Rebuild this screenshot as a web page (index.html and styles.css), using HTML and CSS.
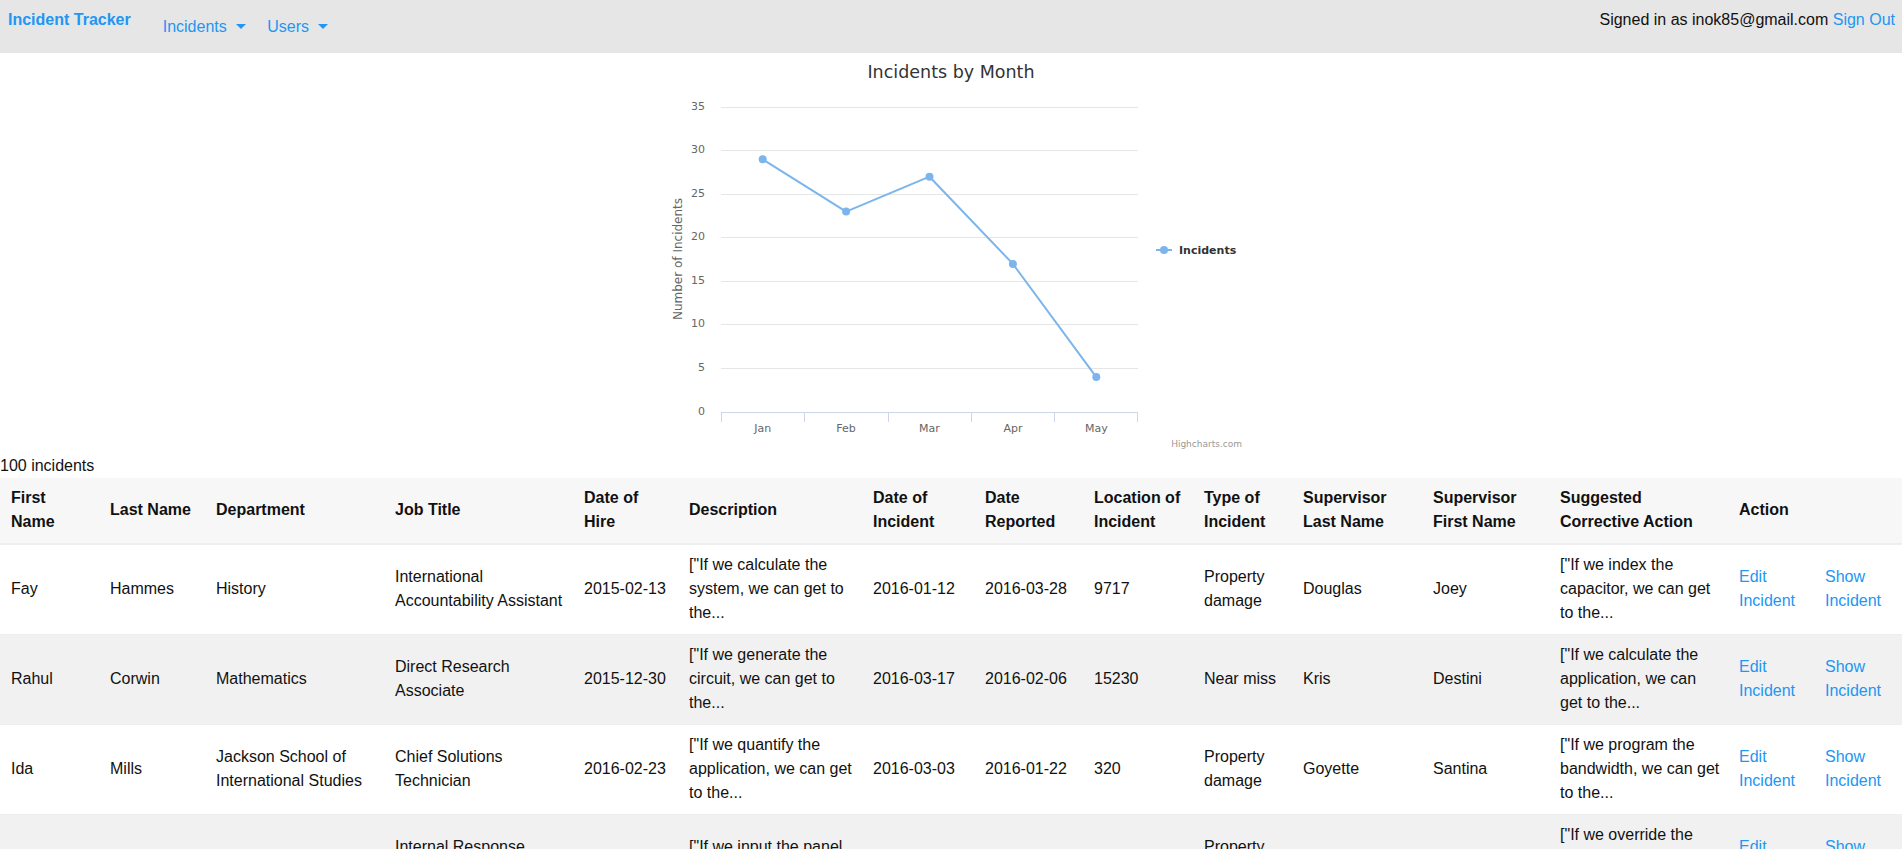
FILE: index.html
```html
<!DOCTYPE html>
<html lang="en">
<head>
<meta charset="utf-8">
<title>Incident Tracker</title>
<link rel="stylesheet" href="styles.css">
</head>
<body>
<nav class="navbar">
  <a class="brand" href="#">Incident Tracker</a>
  <ul class="menu">
    <li><a href="#">Incidents <span class="caret"></span></a></li>
    <li><a href="#">Users <span class="caret"></span></a></li>
  </ul>
  <div class="account">Signed in as inok85@gmail.com <a href="#">Sign Out</a></div>
</nav>

<main>
  <div class="chart">
    <svg class="chart-svg" width="600" height="400" viewBox="0 1 600 400">
      <rect x="0" y="0" width="600" height="402" fill="#ffffff"/>
      <text class="ch-title" x="300" y="26" text-anchor="middle">Incidents by Month</text>
      <g class="grid">
        <line x1="70" x2="487" y1="55.5" y2="55.5"/>
        <line x1="70" x2="487" y1="98.5" y2="98.5"/>
        <line x1="70" x2="487" y1="142.5" y2="142.5"/>
        <line x1="70" x2="487" y1="185.5" y2="185.5"/>
        <line x1="70" x2="487" y1="229.5" y2="229.5"/>
        <line x1="70" x2="487" y1="272.5" y2="272.5"/>
        <line x1="70" x2="487" y1="316.5" y2="316.5"/>
      </g>
      <g class="axis">
        <line x1="70" x2="487" y1="360.5" y2="360.5"/>
        <line x1="70.5" x2="70.5" y1="360" y2="370"/>
        <line x1="153.5" x2="153.5" y1="360" y2="370"/>
        <line x1="237.5" x2="237.5" y1="360" y2="370"/>
        <line x1="320.5" x2="320.5" y1="360" y2="370"/>
        <line x1="403.5" x2="403.5" y1="360" y2="370"/>
        <line x1="486.5" x2="486.5" y1="360" y2="370"/>
      </g>
      <g class="ylabels" text-anchor="end">
        <text x="54" y="58">35</text>
        <text x="54" y="101">30</text>
        <text x="54" y="145">25</text>
        <text x="54" y="188">20</text>
        <text x="54" y="232">15</text>
        <text x="54" y="275">10</text>
        <text x="54" y="319">5</text>
        <text x="54" y="363">0</text>
      </g>
      <text class="ytitle" x="0" y="0" text-anchor="middle" transform="translate(31 207) rotate(-90)">Number of Incidents</text>
      <g class="xlabels" text-anchor="middle">
        <text x="111.7" y="380">Jan</text>
        <text x="195.1" y="380">Feb</text>
        <text x="278.5" y="380">Mar</text>
        <text x="361.9" y="380">Apr</text>
        <text x="445.3" y="380">May</text>
      </g>
      <polyline class="series" points="111.7,107.3 195.1,159.6 278.5,124.7 361.9,211.9 445.3,325.1"/>
      <g class="markers">
        <circle cx="111.7" cy="107.3" r="4"/>
        <circle cx="195.1" cy="159.6" r="4"/>
        <circle cx="278.5" cy="124.7" r="4"/>
        <circle cx="361.9" cy="211.9" r="4"/>
        <circle cx="445.3" cy="325.1" r="4"/>
      </g>
      <g class="legend">
        <line x1="505" x2="521" y1="198" y2="198"/>
        <circle cx="513" cy="198" r="4"/>
        <text x="528" y="202">Incidents</text>
      </g>
      <text class="credits" x="591" y="395" text-anchor="end">Highcharts.com</text>
    </svg>
  </div>

  <p class="count">100 incidents</p>

  <table class="incidents">
    <colgroup>
      <col class="w-first">
      <col class="w-last">
      <col class="w-dept">
      <col class="w-job">
      <col class="w-hire">
      <col class="w-desc">
      <col class="w-date">
      <col class="w-reported">
      <col class="w-location">
      <col class="w-type">
      <col class="w-suplast">
      <col class="w-supfirst">
      <col class="w-action-text">
      <col class="w-edit">
      <col class="w-show">
    </colgroup>
    <thead>
      <tr>
        <th>First Name</th>
        <th>Last Name</th>
        <th>Department</th>
        <th>Job Title</th>
        <th>Date of Hire</th>
        <th>Description</th>
        <th>Date of Incident</th>
        <th>Date Reported</th>
        <th>Location of Incident</th>
        <th>Type of Incident</th>
        <th>Supervisor Last Name</th>
        <th>Supervisor First Name</th>
        <th>Suggested Corrective Action</th>
        <th colspan="2">Action</th>
      </tr>
    </thead>
    <tbody>
      <tr>
        <td>Fay</td>
        <td>Hammes</td>
        <td>History</td>
        <td>International Accountability Assistant</td>
        <td>2015-02-13</td>
        <td>["If we calculate the system, we can get to the...</td>
        <td>2016-01-12</td>
        <td>2016-03-28</td>
        <td>9717</td>
        <td>Property damage</td>
        <td>Douglas</td>
        <td>Joey</td>
        <td class="corrective">["If we index the capacitor, we can get to the...</td>
        <td><a href="#">Edit Incident</a></td>
        <td><a href="#">Show Incident</a></td>
      </tr>
      <tr>
        <td>Rahul</td>
        <td>Corwin</td>
        <td>Mathematics</td>
        <td>Direct Research Associate</td>
        <td>2015-12-30</td>
        <td>["If we generate the circuit, we can get to the...</td>
        <td>2016-03-17</td>
        <td>2016-02-06</td>
        <td>15230</td>
        <td>Near miss</td>
        <td>Kris</td>
        <td>Destini</td>
        <td class="corrective">["If we calculate the application, we can get to the...</td>
        <td><a href="#">Edit Incident</a></td>
        <td><a href="#">Show Incident</a></td>
      </tr>
      <tr>
        <td>Ida</td>
        <td>Mills</td>
        <td>Jackson School of International Studies</td>
        <td>Chief Solutions Technician</td>
        <td>2016-02-23</td>
        <td>["If we quantify the application, we can get to the...</td>
        <td>2016-03-03</td>
        <td>2016-01-22</td>
        <td>320</td>
        <td>Property damage</td>
        <td>Goyette</td>
        <td>Santina</td>
        <td class="corrective">["If we program the bandwidth, we can get to the...</td>
        <td><a href="#">Edit Incident</a></td>
        <td><a href="#">Show Incident</a></td>
      </tr>
      <tr>
        <td>Jaylen</td>
        <td>Kuhn</td>
        <td>Physics</td>
        <td>Internal Response Planner</td>
        <td>2015-07-08</td>
        <td>["If we input the panel, we can get to the...</td>
        <td>2016-04-19</td>
        <td>2016-02-14</td>
        <td>4411</td>
        <td>Property damage</td>
        <td>Gleichner</td>
        <td>Ottilie</td>
        <td class="corrective">["If we override the driver, we can get to the...</td>
        <td><a href="#">Edit Incident</a></td>
        <td><a href="#">Show Incident</a></td>
      </tr>
      <tr>
        <td>Marco</td>
        <td>Hilpert</td>
        <td>Chemistry</td>
        <td>Senior Data Officer</td>
        <td>2015-04-21</td>
        <td>["If we back up the port, we can get to the...</td>
        <td>2016-02-02</td>
        <td>2016-05-09</td>
        <td>1288</td>
        <td>Near miss</td>
        <td>Bauch</td>
        <td>Elva</td>
        <td class="corrective">["If we copy the matrix, we can get to the...</td>
        <td><a href="#">Edit Incident</a></td>
        <td><a href="#">Show Incident</a></td>
      </tr>
    </tbody>
  </table>
</main>
</body>
</html>
```

FILE: styles.css
```css
html, body {
  margin: 0;
  padding: 0;
}

body {
  font-family: "Liberation Sans", Arial, Helvetica, sans-serif;
  font-size: 16px;
  line-height: 24px;
  color: #222222;
  background: #ffffff;
}

a {
  color: #2196f3;
  text-decoration: none;
}

/* ---------- Navbar ---------- */
.navbar {
  display: flex;
  align-items: flex-start;
  height: 53px;
  background: #e6e6e6;
  line-height: 20px;
}

.brand {
  padding: 10px 0 0 8px;
  font-weight: bold;
  color: #2196f3;
}

.menu {
  display: flex;
  gap: 21px;
  list-style: none;
  margin: 0 0 0 32px;
  padding: 17px 0 0 0;
}

.caret {
  display: inline-block;
  width: 0;
  height: 0;
  margin-left: 5px;
  vertical-align: 3px;
  border-top: 5px solid #2196f3;
  border-left: 5px solid transparent;
  border-right: 5px solid transparent;
}

.account {
  margin-left: auto;
  padding: 10px 7px 0 0;
  color: #111111;
}

/* ---------- Chart ---------- */
.chart {
  width: 600px;
  height: 400px;
  margin: 0 auto;
}

.chart-svg {
  display: block;
  font-family: "DejaVu Sans", "Lucida Grande", sans-serif;
}

.ch-title {
  font-size: 17.5px;
  fill: #333333;
}

.grid line {
  stroke: #e6e6e6;
  stroke-width: 1;
}

.axis line {
  stroke: #ccd6eb;
  stroke-width: 1;
}

.ylabels text,
.xlabels text {
  font-size: 11px;
  fill: #666666;
}

.ytitle {
  font-size: 12px;
  fill: #666666;
}

.series {
  fill: none;
  stroke: #7cb5ec;
  stroke-width: 2;
  stroke-linejoin: round;
}

.markers circle {
  fill: #7cb5ec;
}

.legend line {
  stroke: #7cb5ec;
  stroke-width: 2;
}

.legend circle {
  fill: #7cb5ec;
}

.legend text {
  font-size: 11px;
  font-weight: bold;
  fill: #333333;
}

.credits {
  font-size: 9px;
  fill: #999999;
}

/* ---------- Count ---------- */
.count {
  margin: 0;
  padding-top: 1px;
  color: #111111;
}

/* ---------- Table ---------- */
.incidents {
  width: 100%;
  border-collapse: collapse;
  table-layout: fixed;
  color: #111111;
}

.w-first { width: 102px; }
.w-last { width: 106px; }
.w-dept { width: 179px; }
.w-job { width: 189px; }
.w-hire { width: 105px; }
.w-desc { width: 184px; }
.w-date { width: 112px; }
.w-reported { width: 109px; }
.w-location { width: 110px; }
.w-type { width: 99px; }
.w-suplast { width: 130px; }
.w-supfirst { width: 127px; }
.w-action-text { width: 179px; }
.w-edit { width: 86px; }
.w-show { width: 85px; }

.incidents th,
.incidents td {
  padding: 8px 8px 9px 8px;
  text-align: left;
  vertical-align: middle;
  line-height: 24px;
  border-top: 1px solid #eeeeee;
}

.incidents th:first-child,
.incidents td:first-child {
  padding-left: 11px;
  padding-right: 9px;
}

.incidents td.corrective {
  padding-right: 10px;
}

.incidents thead th {
  background: #f7f7f7;
  border-top: 0;
  border-bottom: 2px solid #eeeeee;
  font-weight: bold;
}

.incidents tbody tr:nth-child(odd) {
  background: #ffffff;
}

.incidents tbody tr:nth-child(even) {
  background: #f1f1f1;
}
```
